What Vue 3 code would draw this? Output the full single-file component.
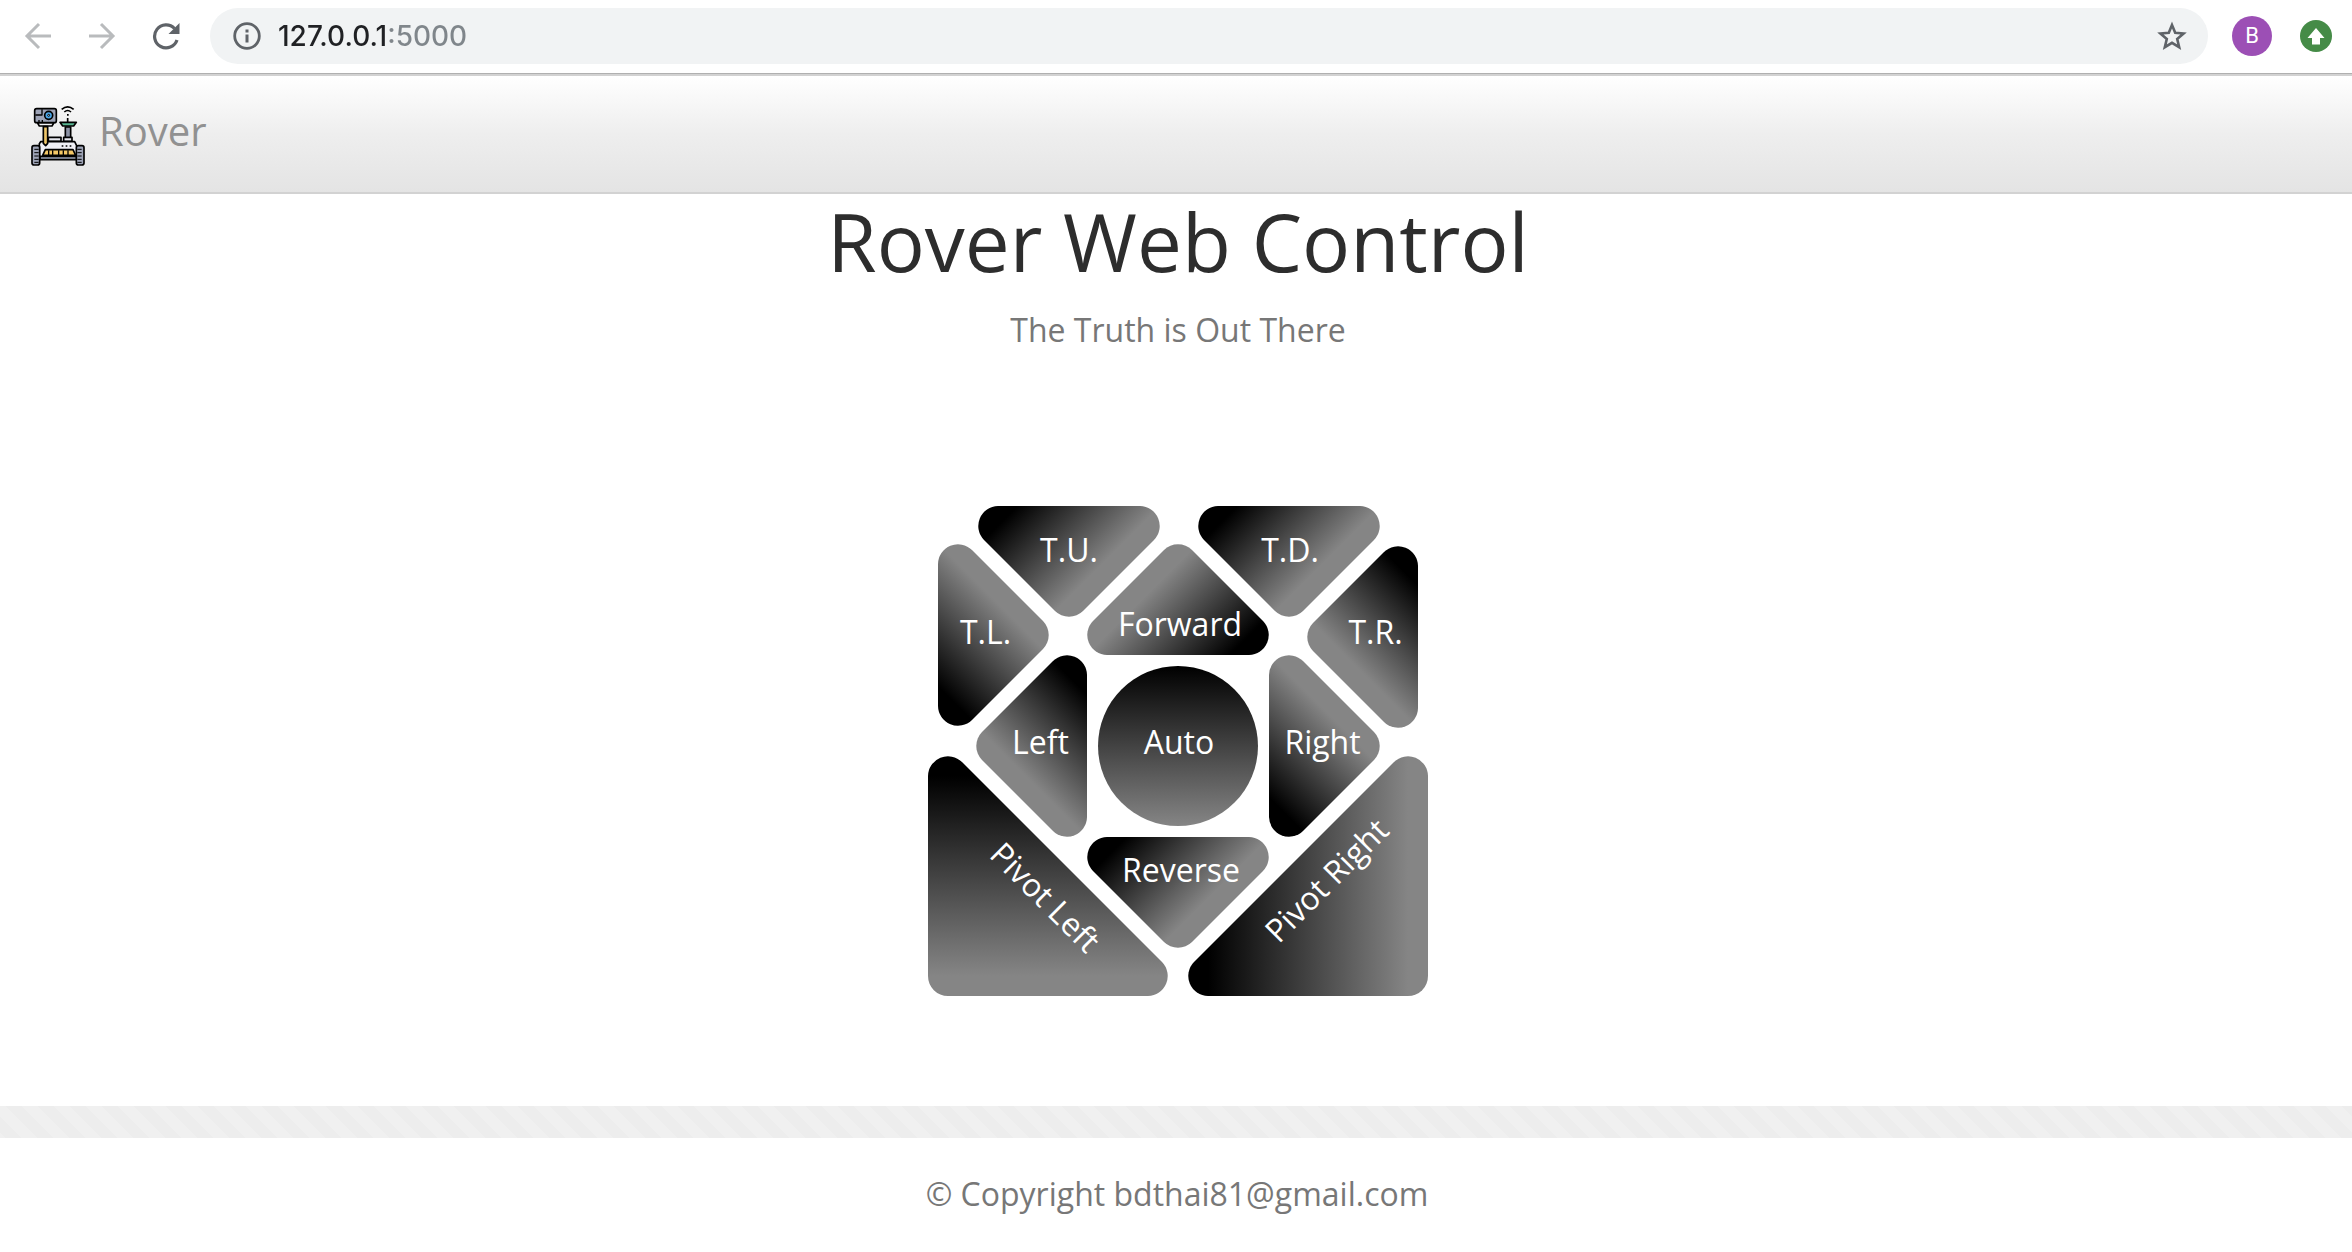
<script setup>
import { ref } from 'vue'

const address = ref('127.0.0.1:5000')

const controls = [
  { id: 'tilt-up', label: 'T.U.', shape: 'down' },
  { id: 'tilt-down', label: 'T.D.', shape: 'down' },
  { id: 'turn-left', label: 'T.L.', shape: 'east' },
  { id: 'turn-right', label: 'T.R.', shape: 'west' },
  { id: 'forward', label: 'Forward', shape: 'up' },
  { id: 'left', label: 'Left', shape: 'west' },
  { id: 'auto', label: 'Auto', shape: 'round' },
  { id: 'right', label: 'Right', shape: 'east' },
  { id: 'reverse', label: 'Reverse', shape: 'down' },
  { id: 'pivot-left', label: 'Pivot Left', shape: 'corner' },
  { id: 'pivot-right', label: 'Pivot Right', shape: 'corner' },
]
</script>

<template>
  <div class="page">
    <div class="toolbar">
      <button class="tool" type="button" aria-label="Back" disabled>
        <svg width="28" height="28" viewBox="0 0 28 28" fill="none" stroke="#b9bbbd" stroke-width="3">
          <path d="M27 14H3M15 2L3 14l12 12" />
        </svg>
      </button>
      <button class="tool" type="button" aria-label="Next" disabled>
        <svg width="28" height="28" viewBox="0 0 28 28" fill="none" stroke="#b9bbbd" stroke-width="3">
          <path d="M1 14h24M13 2l12 12-12 12" />
        </svg>
      </button>
      <button class="tool" type="button" aria-label="Reload">
        <svg width="28" height="28" viewBox="0 0 28 28">
          <path d="M22.5 6.5A11.5 11.5 0 1 0 25 18" fill="none" stroke="#5f6368" stroke-width="3.2" />
          <path d="M27.500 1V12H16.500Z" fill="#5f6368" />
        </svg>
      </button>
      <div class="omnibox">
        <svg width="28" height="28" viewBox="0 0 28 28" aria-hidden="true">
          <circle cx="14" cy="14" r="12.300" fill="none" stroke="#5f6368" stroke-width="2.800" />
          <path d="M12.500 7.500h3v3h-3zM12.500 12.500h3v8h-3z" fill="#5f6368" />
        </svg>
        <input v-model="address" class="address" type="text" aria-label="Address" />
        <button class="star" type="button" aria-label="Bookmark">
          <svg width="30" height="30" viewBox="0 0 30 30">
            <path
              d="M15 4l3.200 7.800 8.400.7-6.400 5.500 2 8.200L15 21.800l-7.200 4.400 2-8.200-6.400-5.500 8.400-.7z"
              fill="none"
              stroke="#5f6368"
              stroke-width="2.600"
            />
          </svg>
        </button>
      </div>
      <button class="avatar" type="button">B</button>
      <button class="update" type="button" aria-label="Update">
        <svg width="32" height="32" viewBox="0 0 32 32">
          <circle cx="16" cy="16" r="16" fill="#458b47" />
          <path d="M16 8l8.500 10H20v6.500h-8V18H7.500z" fill="#fff" />
        </svg>
      </button>
    </div>

    <nav class="navbar">
      <a class="brand" href="#">
        <svg width="54" height="61" viewBox="33 30 162 183" aria-hidden="true" stroke-linejoin="round">
          <g stroke="#000" stroke-width="5">
            <path d="M136 96h16v36h-16z" fill="#8d93a5" />
            <path d="M120 82h49l-8 11h-33z" fill="#57b590" />
            <path d="M143 69v13" fill="none" />
            <path d="M52 83h50l-6 10H58z" fill="#f2f2f6" />
            <rect x="44" y="41" width="65" height="42" rx="6" fill="#9da3b6" />
            <path d="M46 60h20V43M57 82v-7M67 82v-7" fill="none" stroke-width="4" />
            <circle cx="86" cy="61" r="12" fill="#4aa6e8" />
            <circle cx="86" cy="61" r="3" fill="#bfe3fb" stroke-width="3" />
            <path d="M85 127h38v12H85zM131 127h25v12h-25z" fill="#e5e6ec" />
            <path d="M62 140h102l7 14v35H58v-43z" fill="#f0f0f5" />
            <path d="M70 95h13v50l-6 7-7-7z" fill="#eec66a" />
            <path d="M76 164h83l8 17H68z" fill="#f5c867" />
            <path d="M60 184h110v10H60z" fill="#9da3b6" />
            <rect x="36" y="152" width="23" height="58" rx="6" fill="#9da3b6" />
            <rect x="169" y="152" width="23" height="58" rx="6" fill="#9da3b6" />
          </g>
          <g fill="none" stroke="#000" stroke-width="5">
            <path d="M86 166v14M98 166v14M116 166v14M130 166v14M144 166v14" stroke-width="4" />
            <path d="M43 163h13M43 173h13M43 183h13M43 193h13M43 202h13" stroke-width="3" />
            <path d="M172 163h13M172 173h13M172 183h13M172 193h13M172 202h13" stroke-width="3" />
            <path d="M125 43q18-15 36 0M133 51q10-9 20 0" />
          </g>
          <path d="M125 151h5v4h-5zM137 151h5v4h-5zM149 151h5v4h-5zM141 57h5v5h-5z" />
        </svg>
        <span>Rover</span>
      </a>
    </nav>

    <main class="content">
      <h1>Rover Web Control</h1>
      <p class="tagline">The Truth is Out There</p>
      <div class="pad">
        <button
          v-for="control in controls"
          :key="control.id"
          type="button"
          :class="['control', control.shape, control.id]"
        >
          <span>{{ control.label }}</span>
        </button>
      </div>
    </main>

    <footer>
      <div class="stripes"></div>
      <p class="copyright">© Copyright bdthai81@gmail.com</p>
    </footer>
  </div>
</template>

<style>
body {
  margin: 0;
  background: #fff;
}
</style>

<style scoped>
.page {
  font-family: 'Open Sans', sans-serif;
  font-size: 32px;
  line-height: 48px;
  color: #777;
}

button {
  padding: 0;
  border: 0;
  background: none;
  font: inherit;
  color: inherit;
}

svg {
  display: block;
}

.toolbar {
  display: flex;
  align-items: center;
  height: 72px;
  padding: 0 20px 1px 24px;
  border-bottom: 1px solid #b0b0b0;
}

.tool {
  margin-right: 36px;
}

.tool:nth-child(3) {
  margin-right: 30px;
}

.omnibox {
  display: flex;
  flex: 1;
  align-items: center;
  box-sizing: border-box;
  height: 56px;
  padding: 0 21px 0 23px;
  border-radius: 28px;
  background: #f1f3f4;
}

.address {
  flex: 1;
  min-width: 0;
  margin-left: 17px;
  padding: 0;
  border: 0;
  outline: 0;
  font: 500 28px Inter, sans-serif;
  color: #202124;
  background: linear-gradient(90deg, #202124 110px, #80868b 110px);
  background-clip: text;
  -webkit-text-fill-color: transparent;
}

.avatar {
  width: 40px;
  height: 40px;
  margin: 0 28px 0 24px;
  border-radius: 50%;
  background: #9c4fb5;
  color: #fff;
  font: 22px/40px Roboto, sans-serif;
}

.navbar {
  padding: 29px 31px 26px;
  border-top: 2px solid #d2d2d2;
  border-bottom: 2px solid #d2d2d2;
  background: linear-gradient(#fff, #eee 50%, #e4e4e4);
}

.brand {
  display: flex;
  gap: 14px;
  color: #919191;
  font-size: 40px;
  line-height: 52px;
  text-decoration: none;
}

.content {
  padding: 0 0 110px 4px;
  text-align: center;
}

h1 {
  margin: 0 0 18px;
  color: #2d2d2d;
  font-size: 80px;
  font-weight: 400;
  line-height: 94px;
}

.tagline {
  margin: 0 0 152px;
}

/* The pad is a free canvas: its keys interlock diagonally. */
.pad {
  position: relative;
  width: 500px;
  height: 490px;
  margin: 0 auto;
}

.control {
  position: absolute;
  display: flex;
  align-items: center;
  justify-content: center;
  box-sizing: border-box;
  color: #fff;
  line-height: 32px;
  white-space: nowrap;
}

.down,
.up {
  width: 182px;
  height: 111px;
}

.down {
  align-items: flex-start;
  padding-top: 28px;
  background: linear-gradient(135deg, #000 28px, #858585 129px);
  clip-path: path('M20 0H162A20 20 0 0 1 176 34L105 105A20 20 0 0 1 77 105L6 34A20 20 0 0 1 20 0Z');
}

.up {
  align-items: flex-end;
  padding: 0 0 15px 4px;
  background: linear-gradient(315deg, #000 28px, #858585 129px);
  clip-path: path('M20 111H162A20 20 0 0 0 176 77L105 6A20 20 0 0 0 77 6L6 77A20 20 0 0 0 20 111Z');
}

.east,
.west {
  width: 111px;
  height: 182px;
  padding-bottom: 8px;
}

.east {
  background: linear-gradient(45deg, #000 28px, #858585 129px);
  clip-path: path('M0 20V162A20 20 0 0 0 34 176L105 105A20 20 0 0 0 105 77L34 6A20 20 0 0 0 0 20Z');
}

.west {
  background: linear-gradient(225deg, #000 28px, #858585 129px);
  clip-path: path('M111 20V162A20 20 0 0 1 77 176L6 105A20 20 0 0 1 6 77L77 6A20 20 0 0 1 111 20Z');
}

.corner {
  top: 250px;
  width: 240px;
  height: 240px;
}

.tilt-up {
  left: 50px;
  top: 0;
}

.tilt-down {
  left: 270px;
  top: 0;
  padding-left: 2px;
}

.turn-left {
  left: 10px;
  top: 38px;
  padding-right: 16px;
  padding-bottom: 6px;
}

.turn-right {
  left: 379px;
  top: 40px;
  padding-left: 26px;
  padding-bottom: 10px;
}

.forward {
  left: 159px;
  top: 38px;
}

.left {
  left: 48px;
  top: 149px;
  padding-left: 18px;
}

.right {
  left: 341px;
  top: 149px;
  padding-right: 4px;
}

.reverse {
  left: 159px;
  top: 331px;
  padding: 17px 0 0 6px;
}

.auto {
  left: 170px;
  top: 160px;
  width: 160px;
  height: 160px;
  padding-bottom: 8px;
  padding-left: 2px;
  border-radius: 50%;
  background: linear-gradient(#000, #858585);
}

.pivot-left {
  left: 0;
  padding: 42px 4px 0 0;
  background: linear-gradient(#000 20px, #858585 220px);
  clip-path: path('M0 20A20 20 0 0 1 34 6L234 206A20 20 0 0 1 220 240H20A20 20 0 0 1 0 220Z');
}

.pivot-right {
  left: 260px;
  padding: 8px 0 0 36px;
  background: linear-gradient(90deg, #000 20px, #858585 220px);
  clip-path: path('M240 20A20 20 0 0 0 206 6L6 206A20 20 0 0 0 20 240H220A20 20 0 0 0 240 220Z');
}

.pivot-left span {
  transform: rotate(45deg);
}

.pivot-right span {
  transform: rotate(-45deg);
}

.stripes {
  height: 32px;
  background: linear-gradient(
      45deg,
      #ededed 25%,
      #f0f0f0 25%,
      #f0f0f0 50%,
      #ededed 50%,
      #ededed 75%,
      #f0f0f0 75%
    )
    5px 0 / 32px 32px;
}

.copyright {
  margin: 0;
  padding: 32px 0 34px 2px;
  text-align: center;
}
</style>
